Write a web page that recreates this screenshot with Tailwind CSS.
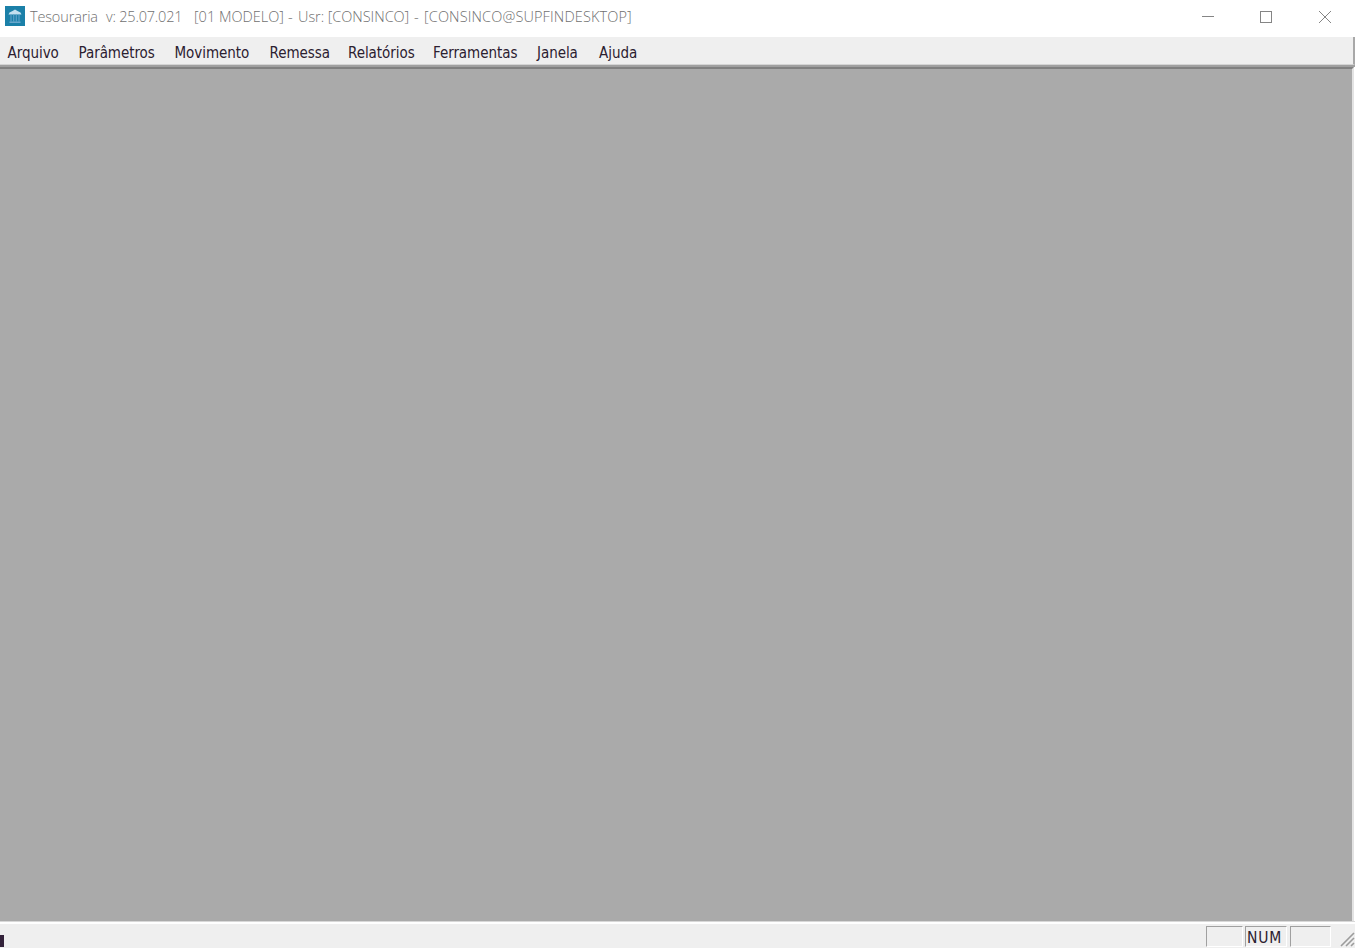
<!DOCTYPE html>
<html lang="pt-BR">
<head>
    <meta charset="UTF-8">
    <meta name="viewport" content="width=device-width, initial-scale=1.0">
    <title>Tesouraria</title>
    <script src="https://cdn.jsdelivr.net/npm/@tailwindcss/browser@4"></script>
</head>
<body class="flex flex-col h-screen overflow-hidden bg-white">
    <!-- Title bar -->
    <header class="flex h-[37px] shrink-0 items-start bg-white pl-[5px]">
        <svg class="mt-[6px] h-5 w-5 shrink-0" viewBox="0 0 20 20">
            <rect width="20" height="20" fill="#1b80a8"/>
            <path d="M3.500 8.500 4.500 6.500l3-1.500L10 3.500 12.500 5l3 1.500 1 2z" fill="#c3dfef"/>
            <path d="M6 8.500v7M8.700 8.500v7M11.300 8.500v7M14 8.500v7" stroke="#5fa0ca" stroke-width="1.100"/>
            <path d="M4.500 16.200h11" stroke="#78aed2" stroke-width="1.300"/>
        </svg>
        <h1 class="ml-[5px] mt-[5px] flex whitespace-pre font-['Open_Sans','Noto_Sans',sans-serif] text-[14.5px] leading-[24px] font-light text-[#707070]">
            <span class="w-[76px] tracking-[-0.15px]">Tesouraria</span>
            <span class="w-[88px] tracking-[-0.2px]">v: 25.07.021</span>
            <span class="w-[94px] tracking-[0px]">[01 MODELO]</span>
            <span class="w-[10px]">-</span>
            <span class="w-[116px] tracking-[-0.05px]">Usr: [CONSINCO]</span>
            <span class="w-[10px]">-</span>
            <span class="tracking-[0.13px]">[CONSINCO@SUPFINDESKTOP]</span>
        </h1>
        <div class="ml-auto flex h-[34px] shrink-0 items-center text-[#858585]">
            <svg class="h-3 w-3" viewBox="0 0 12 12" shape-rendering="crispEdges"><path d="M0 5.500h12" stroke="currentColor"/></svg>
            <svg class="ml-[46px] h-3 w-3" viewBox="0 0 12 12" fill="none" shape-rendering="crispEdges"><path d="M.5.500h11v11H.5z" stroke="currentColor"/></svg>
            <svg class="ml-[47px] mr-6 h-3 w-3" viewBox="0 0 12 12"><path d="M0 0l12 12M12 0 0 12" stroke="currentColor"/></svg>
        </div>
    </header>

    <!-- Menu bar -->
    <nav class="flex h-[28px] shrink-0 border-r-2 border-b border-r-[#a8a8a8] border-b-[#d4d4d4] bg-[#efefef] pl-[7.5px] pt-[3px] font-['DejaVu_Sans_Condensed','DejaVu_Sans',sans-serif] text-[15px] leading-[26px] font-normal tracking-[-0.05px] whitespace-nowrap text-[#2b2030]">
        <a class="w-[71px]">Arquivo</a>
        <a class="w-[96px]">Parâmetros</a>
        <a class="w-[95px]">Movimento</a>
        <a class="w-[78.5px]">Remessa</a>
        <a class="w-[85px]">Relatórios</a>
        <a class="w-[104px]">Ferramentas</a>
        <a class="w-[62px]">Janela</a>
        <a>Ajuda</a>
    </nav>
    <div class="h-[2px] shrink-0 bg-[#a0a0a0]"></div>

    <!-- MDI workspace -->
    <main class="flex-1 border-t-2 border-r-2 border-t-[#808080] border-r-[#e3e3e3] mr-px bg-[#aaaaaa]"></main>

    <!-- Status bar -->
    <footer class="flex h-[27px] shrink-0 border-t border-[#d8d8d8] bg-[#efefef]">
        <div class="flex w-full items-start border-t-2 border-white pt-[2px]">
            <div class="mt-[9px] h-[12px] w-1 bg-[#33223a]"></div>
            <div class="ml-auto h-[21px] w-[37px] border border-t-[#a0a0a0] border-l-[#a0a0a0] border-r-white border-b-white"></div>
            <div class="ml-[2px] h-[21px] w-[42px] border border-t-[#a0a0a0] border-l-[#a0a0a0] border-r-white border-b-white pl-[1px] font-['DejaVu_Sans_Condensed','DejaVu_Sans',sans-serif] text-[15.5px] leading-[22px] tracking-[0.8px] text-[#2b2030]">NUM</div>
            <div class="ml-[3px] h-[21px] w-[41px] border border-t-[#a0a0a0] border-l-[#a0a0a0] border-r-white border-b-white"></div>
            <svg class="mt-[5px] ml-[9px] h-4 w-[15px]" viewBox="0 0 15 16" fill="none">
                <path d="M1 15 14 2M6 15l8-8M11 15l3-3" stroke="#9c9c9c" stroke-width="1.600"/>
            </svg>
        </div>
    </footer>
</body>
</html>
